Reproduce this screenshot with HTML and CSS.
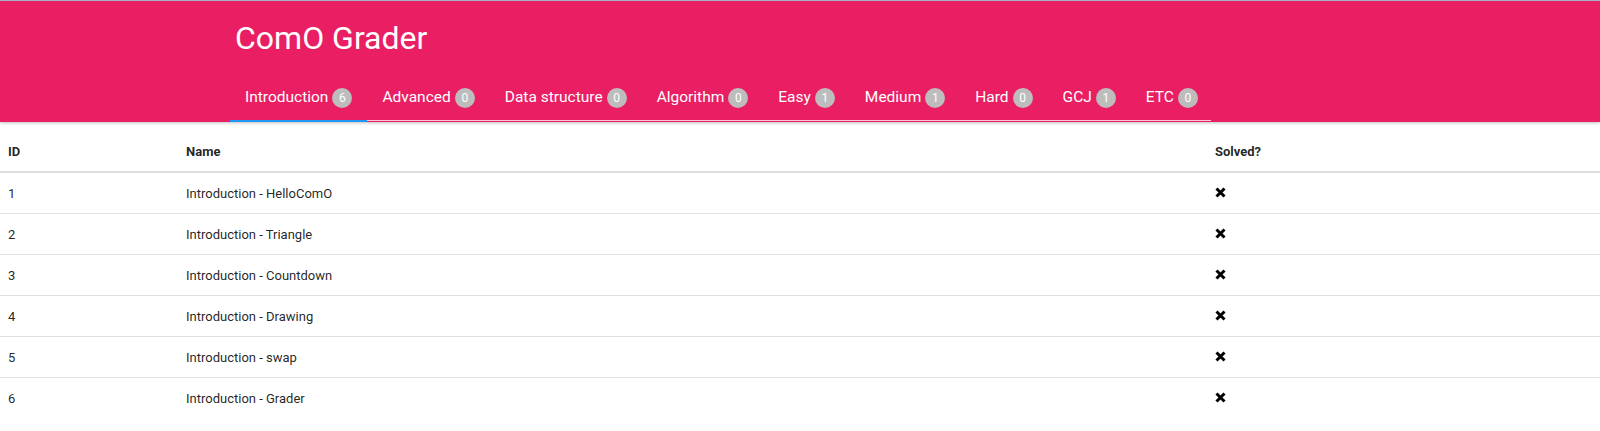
FILE: index.html
```html
<!DOCTYPE html>
<html>
<head>
<meta charset="utf-8">
<title>ComO Grader</title>
<link rel="stylesheet" href="styles.css">
</head>
<body>
<header class="header">
  <div class="inner">
    <h1 class="title">ComO Grader</h1>
    <nav class="tabs">
      <a class="tab active">Introduction<span class="badge">6</span></a>
      <a class="tab">Advanced<span class="badge">0</span></a>
      <a class="tab">Data structure<span class="badge">0</span></a>
      <a class="tab">Algorithm<span class="badge">0</span></a>
      <a class="tab">Easy<span class="badge">1</span></a>
      <a class="tab">Medium<span class="badge">1</span></a>
      <a class="tab">Hard<span class="badge">0</span></a>
      <a class="tab">GCJ<span class="badge">1</span></a>
      <a class="tab">ETC<span class="badge">0</span></a>
    </nav>
  </div>
</header>
<table class="problems">
  <colgroup><col class="c-id"><col class="c-name"><col class="c-solved"></colgroup>
  <thead>
    <tr><th>ID</th><th>Name</th><th>Solved?</th></tr>
  </thead>
  <tbody>
    <tr><td>1</td><td>Introduction - HelloComO</td><td><svg class="x" viewBox="0 0 11 11"><path d="M1.5 1.5L9.5 9.5M9.5 1.5L1.5 9.5"/></svg></td></tr>
    <tr><td>2</td><td>Introduction - Triangle</td><td><svg class="x" viewBox="0 0 11 11"><path d="M1.5 1.5L9.5 9.5M9.5 1.5L1.5 9.5"/></svg></td></tr>
    <tr><td>3</td><td>Introduction - Countdown</td><td><svg class="x" viewBox="0 0 11 11"><path d="M1.5 1.5L9.5 9.5M9.5 1.5L1.5 9.5"/></svg></td></tr>
    <tr><td>4</td><td>Introduction - Drawing</td><td><svg class="x" viewBox="0 0 11 11"><path d="M1.5 1.5L9.5 9.5M9.5 1.5L1.5 9.5"/></svg></td></tr>
    <tr><td>5</td><td>Introduction - swap</td><td><svg class="x" viewBox="0 0 11 11"><path d="M1.5 1.5L9.5 9.5M9.5 1.5L1.5 9.5"/></svg></td></tr>
    <tr><td>6</td><td>Introduction - Grader</td><td><svg class="x" viewBox="0 0 11 11"><path d="M1.5 1.5L9.5 9.5M9.5 1.5L1.5 9.5"/></svg></td></tr>
  </tbody>
</table>
</body>
</html>
```
FILE: styles.css
```css
html, body {
  margin: 0;
  padding: 0;
  background: #fff;
  font-family: Roboto, "Liberation Sans", sans-serif;
}

.header {
  background: #e91e63;
  border-top: 1px solid #a3b4c8;
  height: 121px;
  box-shadow: 0 1px 3px rgba(0, 0, 0, 0.25);
  position: relative;
}

.inner {
  margin-left: 230px;
  width: 981px;
  display: flex;
  flex-direction: column;
}

.title {
  margin: 0;
  padding: 8px 0 0 5px;
  height: 64px;
  line-height: 58px;
  font-size: 32px;
  font-weight: 400;
  color: #fff;
}

.tabs {
  display: flex;
  height: 48px;
  border-bottom: 1px solid rgba(255, 255, 255, 0.75);
  box-sizing: border-box;
  overflow: visible;
}

.tab {
  position: relative;
  display: flex;
  flex-shrink: 0;
  align-items: center;
  padding: 0 15px;
  color: #fff;
  font-size: 15.5px;
  white-space: nowrap;
  cursor: pointer;
}

.tab.active::after {
  content: "";
  position: absolute;
  left: 0;
  right: 0;
  bottom: -2px;
  height: 2px;
  background: #2196f3;
}

.badge {
  display: inline-flex;
  align-items: center;
  justify-content: center;
  flex-shrink: 0;
  width: 20px;
  height: 20px;
  margin-left: 4px;
  margin-top: 2px;
  border-radius: 50%;
  background: #bdbdbd;
  color: #fff;
  font-size: 12px;
}

.problems {
  margin-top: 9px;
  width: 100%;
  border-collapse: collapse;
  table-layout: fixed;
  font-size: 13px;
  color: rgba(0, 0, 0, 0.87);
}

.c-id { width: 178px; }
.c-solved { width: 393px; }

.problems th {
  text-align: left;
  font-weight: 700;
  height: 40px;
  padding: 0 8px;
  border-bottom: 2px solid #dddddd;
}

.problems td {
  height: 40px;
  padding: 0 8px;
  border-bottom: 1px solid #e0e0e0;
}

.problems tbody tr:last-child td {
  border-bottom: none;
}

.x {
  display: block;
  width: 11px;
  height: 11px;
  margin-top: -1px;
}

.x path {
  stroke: #000;
  stroke-width: 3;
  stroke-linecap: butt;
  fill: none;
}
```
